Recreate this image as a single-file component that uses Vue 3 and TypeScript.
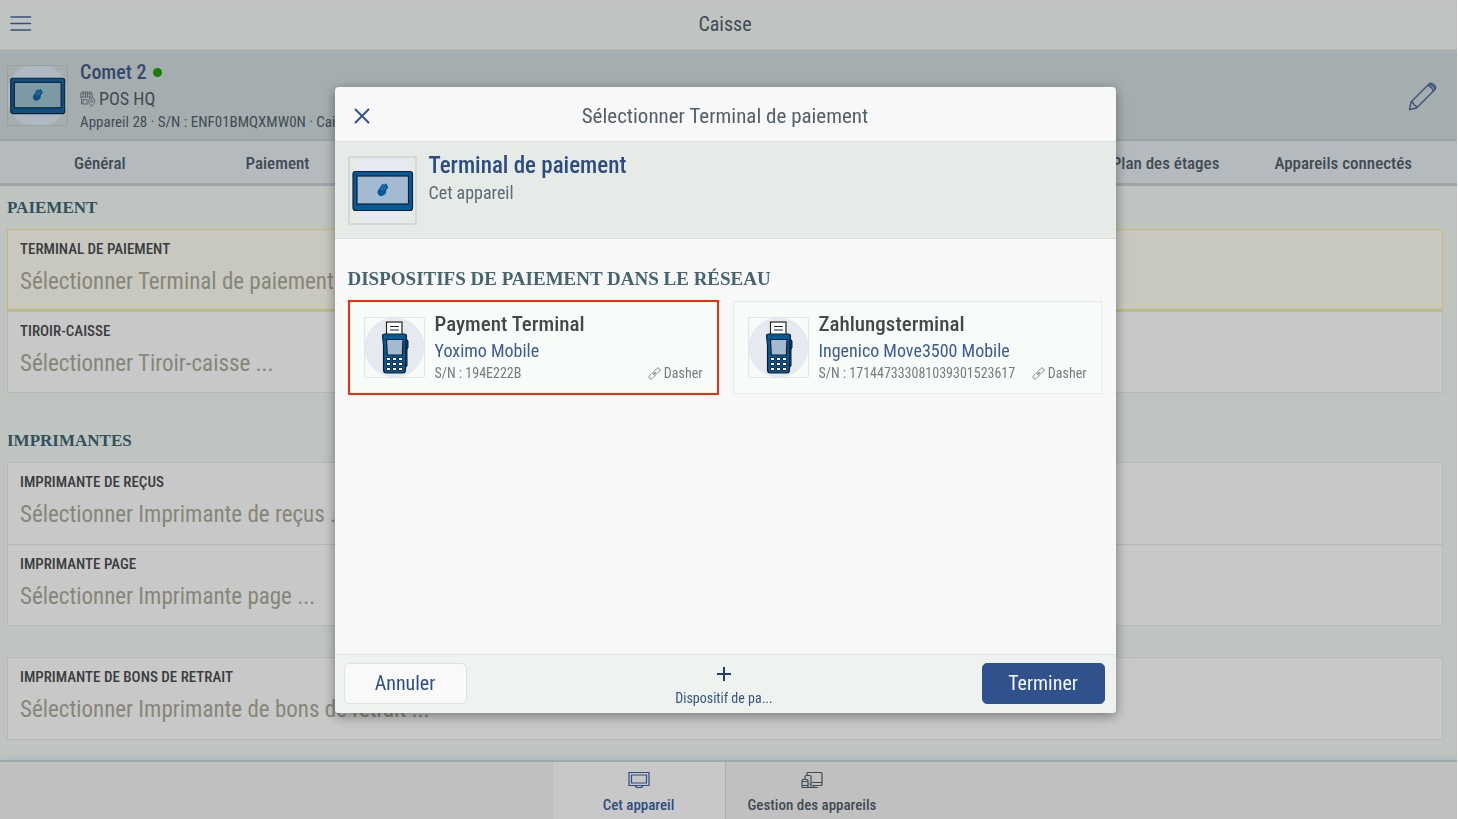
<script setup lang="ts">
import { ref } from 'vue'

interface Field { label: string; value: string; warn?: boolean }
interface Section { title?: string; fields: Field[] }
interface Device { name: string; model: string; serial: string; link: string }

const sections: Section[] = [
  {
    title: 'PAIEMENT',
    fields: [
      { label: 'TERMINAL DE PAIEMENT', value: 'Sélectionner Terminal de paiement ...', warn: true },
      { label: 'TIROIR-CAISSE', value: 'Sélectionner Tiroir-caisse ...' },
    ],
  },
  {
    title: 'IMPRIMANTES',
    fields: [
      { label: 'IMPRIMANTE DE REÇUS', value: 'Sélectionner Imprimante de reçus ...' },
      { label: 'IMPRIMANTE PAGE', value: 'Sélectionner Imprimante page ...' },
    ],
  },
  {
    fields: [
      { label: 'IMPRIMANTE DE BONS DE RETRAIT', value: 'Sélectionner Imprimante de bons de retrait ...' },
    ],
  },
]

const devices: Device[] = [
  { name: 'Payment Terminal', model: 'Yoximo Mobile', serial: '194E222B', link: 'Dasher' },
  { name: 'Zahlungsterminal', model: 'Ingenico Move3500 Mobile', serial: '171447333081039301523617', link: 'Dasher' },
]

const selected = ref(0)
</script>

<template>
  <div class="app">
    <svg class="defs" aria-hidden="true">
      <symbol id="tablet" viewBox="2 2 65 65">
        <circle cx="34.500" cy="34.500" r="34.500" fill="var(--disc)" />
        <rect x="5" y="15.500" width="59.500" height="39" rx="2.500" fill="var(--case)" stroke="#10202c" stroke-width="1.200" />
        <rect x="9" y="20" width="51.500" height="28" fill="var(--screen)" stroke="#10202c" stroke-width="1.200" />
        <g stroke="var(--case)" stroke-width="2.400" stroke-linecap="round" fill="none">
          <path d="M31.500 34.500l3.400-5.300M33.800 35l4-6.300M36 35.500l3-4.700" />
        </g>
        <ellipse cx="33.800" cy="36" rx="4.400" ry="3.800" fill="var(--case)" transform="rotate(-35 33.800 36)" />
        <path d="M33 34l2.700-4.300M35.300 34.500l2.400-4" stroke="#8fb0cc" stroke-width=".5" />
      </symbol>
      <symbol id="terminal" viewBox="1 1 59 59">
        <circle cx="30.500" cy="30.500" r="30" fill="#e6eaf0" />
        <path d="M40 22h2.500l1.500 2v7l-1 1v17l-2 2h-3z" fill="#0a3357" stroke="#10202c" />
        <rect x="22.500" y="5" width="15.500" height="13" fill="#fff" stroke="#222" stroke-width="1.200" />
        <path d="M26 9.500h9M26 13h9" stroke="#222" stroke-width="1.100" />
        <path d="M20.500 17h20q2 0 2 2l-1 9v25q0 3-3 3h-16q-3 0-3-3v-25l-1-9q0-2 2-2z" fill="#04599a" stroke="#10202c" stroke-width="1.200" />
        <path d="M22.500 22.500h16.500l-.7 15.500h-15z" fill="#a3bad2" stroke="#10202c" stroke-width="1.200" />
        <g fill="#fff" stroke="#10202c" stroke-width=".9">
          <path d="M22.500 40.500h4v3h-4zM28.500 40.500h4v3h-4zM34.500 40.500h4v3h-4zM22.500 45.500h4v3h-4zM28.500 45.500h4v3h-4zM34.500 45.500h4v3h-4zM22.500 50.500h4v3h-4zM28.500 50.500h4v3h-4zM34.500 50.500h4v3h-4z" />
        </g>
      </symbol>
    </svg>

    <header class="topbar">
      <button class="menu" aria-label="Menu">
        <svg width="22" height="18" viewBox="0 0 22 18" fill="none" stroke="currentColor" stroke-width="1.600" stroke-linecap="round">
          <path d="M1 2h19.500M1 8.500h19.500M1 15h19.500" />
        </svg>
      </button>
      <h1>Caisse</h1>
    </header>

    <section class="device">
      <svg class="thumb dim"><use href="#tablet" /></svg>
      <div class="device-text">
        <h2>Comet 2 <span class="dot"></span></h2>
        <p class="site">
          <svg width="16" height="16" viewBox="0 0 16 16" fill="none" stroke="currentColor" stroke-width="1">
            <path d="M1.500 1h10l1 4v1h-12v-1zM3.700 1l-.7 5M5.500 1v5M7.500 1v5M9.500 1l.6 5M.8 3h11.400M1.500 6v7h6.500M3 8.500h4v4.500M3 8.500v4.500M11.500 15.500c-2-2.500-3-4-3-5.300a3 3 0 0 1 6.300 0c0 1.300-1.300 2.800-3.300 5.300z" />
            <circle cx="11.600" cy="10.200" r="1.100" />
          </svg>
          POS HQ
        </p>
        <p class="meta">Appareil 28 · S/N : ENF01BMQXMW0N · Caisse</p>
      </div>
      <button class="edit" aria-label="Modifier">
        <svg width="30" height="30" viewBox="0 0 30 30" fill="none" stroke="currentColor" stroke-width="1.300" stroke-linejoin="round">
          <path d="M1.500 28.500l1.500-7.500 18-18q2-2 5 .8t.8 5l-18.300 18.200zM3 21q2.500.2 2.800 2.800 2.800.3 2.700 3.200M19.500 4.500q4.500 1 5.800 5.800M21 3q4.700 1 5.900 5.800" />
        </svg>
      </button>
    </section>

    <nav class="tabs">
      <a href="#general">Général</a>
      <a href="#paiement">Paiement</a>
      <a href="#plan" class="seventh">Plan des étages</a>
      <a href="#appareils">Appareils connectés</a>
    </nav>

    <main class="content">
      <section v-for="(s, i) in sections" :key="i" class="group">
        <h3 v-if="s.title">{{ s.title }}</h3>
        <div class="fields">
          <button v-for="f in s.fields" :key="f.label" class="field" :class="{ warn: f.warn }">
            <span class="label">{{ f.label }}</span>
            <span class="value">{{ f.value }}</span>
          </button>
        </div>
      </section>
    </main>

    <nav class="bottom">
      <button class="active">
        <svg width="22" height="18" viewBox="0 0 22 18" fill="none" stroke="currentColor" stroke-width="1.200">
          <path d="M1 1.500h20v13h-20zM3.500 4h15v8h-15zM7.500 14.500q0 2 2 2h3q2 0 2-2" />
        </svg>
        Cet appareil
      </button>
      <button>
        <svg width="22" height="18" viewBox="0 0 22 18" fill="none" stroke="currentColor" stroke-width="1.200">
          <path d="M6 4.500v-2q0-1 1-1h13q1 0 1 1v11q0 1-1 1h-9M11 11.500h10M10 16.500h7M13 14.500v2M4 8v-2.500q0-1 1-1h4q1 0 1 1v11h-3M8 13h2M1 9.500q0-1 1-1h4q1 0 1 1v6q0 1-1 1h-4q-1 0-1-1zM1 10.500h6M1 14.500h6" />
        </svg>
        Gestion des appareils
      </button>
    </nav>

    <div class="overlay">
      <div class="modal" role="dialog" aria-modal="true" aria-labelledby="dialog-title">
        <header class="modal-head">
          <button class="close" aria-label="Fermer">
            <svg width="16" height="16" viewBox="0 0 16 16" fill="none" stroke="currentColor" stroke-width="1.900" stroke-linecap="round">
              <path d="M1.500 1.500l13 13M14.500 1.500l-13 13" />
            </svg>
          </button>
          <h2 id="dialog-title">Sélectionner Terminal de paiement</h2>
        </header>
        <section class="modal-info">
          <svg class="thumb large"><use href="#tablet" /></svg>
          <div>
            <h3>Terminal de paiement</h3>
            <p>Cet appareil</p>
          </div>
        </section>
        <div class="modal-body">
          <h3>DISPOSITIFS DE PAIEMENT DANS LE RÉSEAU</h3>
          <div class="cards">
            <button v-for="(d, i) in devices" :key="d.serial" class="card" :class="{ selected: selected === i }" @click="selected = i">
              <svg class="thumb"><use href="#terminal" /></svg>
              <span class="card-text">
                <span class="name">{{ d.name }}</span>
                <span class="model">{{ d.model }}</span>
                <span class="foot">
                  <span>S/N : {{ d.serial }}</span>
                  <span class="link">
                    <svg width="13" height="13" viewBox="0 0 13 13" fill="none" stroke="currentColor" stroke-width=".8">
                      <rect x="-2" y="-3.500" width="4" height="7" rx="2" transform="translate(9 4) rotate(45)" />
                      <rect x="-2" y="-3.500" width="4" height="7" rx="2" transform="translate(4 9) rotate(45)" />
                      <path d="M5 8l3-3" />
                    </svg>
                    {{ d.link }}
                  </span>
                </span>
              </span>
            </button>
          </div>
        </div>
        <footer class="modal-foot">
          <button class="btn">Annuler</button>
          <button class="add">
            <svg width="14" height="14" viewBox="0 0 14 14" stroke="#1d3f78" stroke-width="2">
              <path d="M7 0v14M0 7h14" />
            </svg>
            Dispositif de pa...
          </button>
          <button class="btn primary">Terminer</button>
        </footer>
      </div>
    </div>
  </div>
</template>

<style>
html, body { margin: 0; background: #fff; }
</style>

<style scoped>
* { box-sizing: border-box; }
.app {
  --case: #04599a;
  --screen: #a3bad2;
  --disc: #e6eaf0;
  display: flex;
  flex-direction: column;
  height: 100vh;
  overflow: hidden;
  border-right: 1px solid #fff;
  background: #bfc4c0;
  color: #404b54;
  font-family: "Roboto Condensed", "Liberation Sans Narrow", Lato, sans-serif;
}
.defs { display: none; }
h1, h2, h3, p { margin: 0; font-weight: 400; }
button { padding: 0; border: 0; background: none; font: inherit; color: inherit; text-align: left; cursor: pointer; }
a { color: inherit; text-decoration: none; }
svg { flex: none; }

.topbar {
  display: grid;
  grid-template-columns: 40px 1fr 40px;
  align-items: center;
  height: 50px;
  padding: 0 7px 4px 0;
  border-top: 3px solid #c2bfc0;
  border-bottom: 1px solid #b0b5b2;
}
.topbar h1 { font-size: 20px; text-align: center; }
.menu { display: flex; padding-left: 10px; color: #35517f; }

.device {
  display: flex;
  height: 91px;
  padding: 15px 19px 0 7px;
  background: #a5aeaf;
  border-bottom: 2px solid #9aa6a9;
}
.thumb { width: 61px; height: 61px; border: 1px solid #dfe5e8; border-radius: 2px; }
.thumb.dim { --case: #0c4f82; --screen: #7b9aa3; --disc: #afb9c4; border-color: #98a2a2; }
.thumb.large { width: 69px; height: 69px; border: 2px solid #d3d9d6; }
.device-text { display: flex; flex-direction: column; margin-left: 12px; white-space: nowrap; }
.device-text h2 {
  display: flex;
  align-items: center;
  gap: 7px;
  margin-top: -6px;
  font-size: 20px;
  line-height: 27px;
  font-weight: 500;
  color: #34496f;
}
.dot { width: 9px; height: 9px; border-radius: 50%; background: #178000; }
.site { display: flex; align-items: center; gap: 3px; font-size: 18px; line-height: 26px; }
.site svg { color: #606a70; }
.meta { font-size: 15px; line-height: 20px; }
.edit { display: flex; align-self: flex-start; margin: 16px 0 0 auto; color: #3b5078; }

.tabs {
  display: grid;
  grid-template-columns: repeat(8, 1fr);
  align-items: center;
  height: 45px;
  padding: 2px 25px 0 11px;
  background: #b5babf;
  border-bottom: 3px solid #9fa4ab;
  font-size: 17px;
  font-weight: 500;
  text-align: center;
}
.seventh { grid-column: 7; }

.content { flex: 1; min-height: 0; overflow: hidden; padding: 0 14px 0 7px; }
.group { margin-bottom: 26px; }
.group:last-child { margin: 31px 0 0; }
.group h3, .modal-body h3 {
  font-family: "Liberation Serif", serif;
  font-weight: 700;
  color: #2f505c;
}
.group h3 { font-size: 17px; line-height: 43px; }
.fields { display: flex; flex-direction: column; border: 1px solid #b5b8b7; background: #c8c8c8; }
.field { display: flex; flex-direction: column; height: 81px; padding: 9px 12px 0; white-space: nowrap; }
.field + .field { border-top: 1px solid #b5b8b7; }
.field.warn { height: 82px; margin: -1px -1px 0; background: #c8c8bf; border: 1px solid #c4bc71; border-bottom-width: 2px; }
.label { font-size: 15px; line-height: 20px; font-weight: 500; color: #3a3c3e; }
.value { margin-top: 8px; font-size: 23px; line-height: 30px; color: #868679; }

.bottom {
  display: flex;
  justify-content: center;
  height: 59px;
  padding-right: 6px;
  background: #c0c0c0;
  border-top: 2px solid #a0a7a7;
  box-shadow: 0 -2px 5px #a9bcc2;
}
.bottom button {
  display: flex;
  flex-direction: column;
  align-items: center;
  gap: 6px;
  width: 173px;
  padding-top: 9px;
  font-size: 15px;
  line-height: 20px;
  font-weight: 500;
}
.bottom .active { background: #c8c8c8; border-right: 1px solid #aaadad; color: #2f4d80; }

.overlay {
  position: fixed;
  inset: 0;
  display: flex;
  justify-content: center;
  padding: 87px 8px 106px 0;
}
.modal {
  display: flex;
  flex-direction: column;
  width: 100%;
  max-width: 781px;
  overflow: hidden;
  border-radius: 4px;
  background: #f8f8f8;
  box-shadow: 0 3px 12px rgba(0, 0, 0, 0.4);
}
.modal-head {
  display: grid;
  grid-template-columns: 54px 1fr 54px;
  align-items: center;
  height: 55px;
  padding-top: 3px;
  border-bottom: 1px solid #dcdfdd;
}
.close { display: flex; justify-content: center; color: #2f5190; }
.modal-head h2 { font-size: 21px; text-align: center; color: #53606a; }
.modal-info {
  display: flex;
  gap: 12px;
  height: 97px;
  padding: 14px 13px;
  background: #e6ebe7;
  border-bottom: 1px solid #d9dedb;
}
.modal-info h3 { margin-top: -4px; font-size: 23px; line-height: 28px; font-weight: 500; color: #2c4c82; }
.modal-info p { margin-top: 3px; font-size: 18px; line-height: 20px; color: #5d6975; }
.modal-body { flex: 1; padding: 25px 13px 0; }
.modal-body h3 { font-size: 19px; line-height: 30px; color: #446470; }
.cards { display: grid; grid-template-columns: 1fr 1fr; gap: 13px; margin-top: 6px; }
.card {
  display: flex;
  gap: 10px;
  margin: 1px;
  padding: 15px 14px;
  background: #f7fcf8;
  border: 1px solid #e4ebe9;
}
.card.selected { margin: 0; border: 2px solid #f52a08; }
.card-text { display: flex; flex: 1; flex-direction: column; margin: -6px 0; white-space: nowrap; }
.name { font-size: 21px; line-height: 26px; color: #444846; font-weight: 500; }
.model { font-size: 18px; line-height: 27px; color: #3d5a94; }
.foot { display: flex; justify-content: space-between; font-size: 14px; line-height: 18px; color: #777c7b; }
.link { display: flex; align-items: center; gap: 3px; }
.modal-foot {
  display: grid;
  grid-template-columns: 123px 1fr 123px;
  align-items: center;
  height: 59px;
  padding: 0 11px 2px 9px;
  background: #eff3ef;
  border-top: 1px solid #e2e5e1;
}
.btn {
  height: 41px;
  border: 1px solid #dde2df;
  border-radius: 5px;
  background: #f9f9f9;
  color: #2c4f8a;
  font-size: 20px;
  text-align: center;
}
.primary { border-color: #2f528c; background: #2f528c; color: #f4f7fb; }
.add {
  display: flex;
  flex-direction: column;
  align-items: center;
  gap: 8px;
  justify-self: center;
  padding-top: 8px;
  font-size: 14px;
  line-height: 18px;
  color: #35558c;
}
</style>
